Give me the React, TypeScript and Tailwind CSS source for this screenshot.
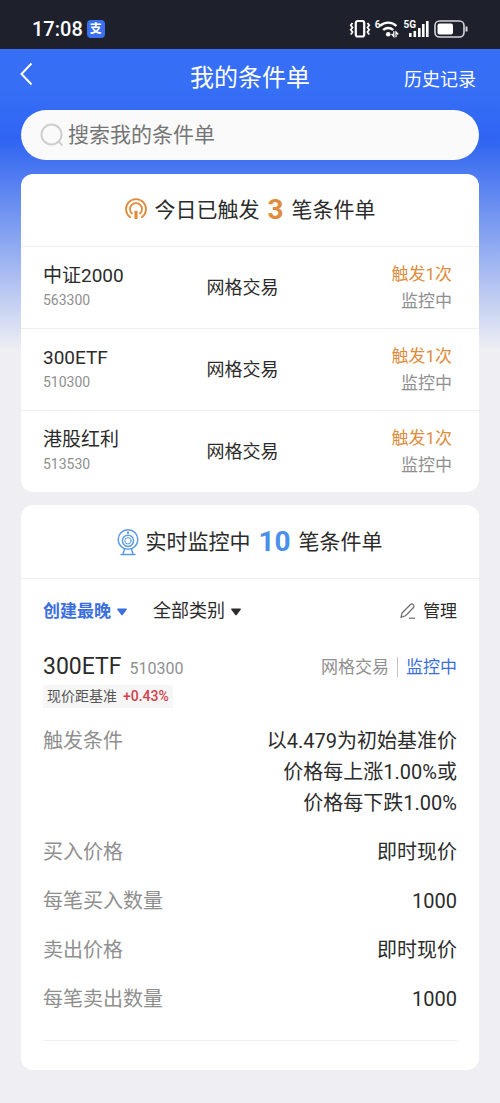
import { useState } from 'react';

const triggered = [
  { name: '中证2000', code: '563300', type: '网格交易', times: 1 },
  { name: '300ETF', code: '510300', type: '网格交易', times: 1 },
  { name: '港股红利', code: '513530', type: '网格交易', times: 1 },
];

const details = [
  { label: '买入价格', value: '即时现价' },
  { label: '每笔买入数量', value: '1000' },
  { label: '卖出价格', value: '即时现价' },
  { label: '每笔卖出数量', value: '1000' },
];

function StatusBar() {
  return (
    <div className="flex h-[49px] items-center justify-between bg-[#1e212b] pt-2 pr-8 pl-8 text-white">
      <div className="flex items-center gap-1">
        <span className="text-xl leading-6 font-medium">17:08</span>
        <span className="flex h-[18px] w-[18px] items-center justify-center rounded bg-[#3a70f0] text-xs leading-none font-bold">
          支
        </span>
      </div>
      <div className="flex items-center gap-1">
        {/* Vibrate */}
        <svg width="22" height="20" viewBox="0 0 22 20" fill="none" stroke="currentColor">
          <rect x="6.8" y="2" width="8.4" height="15.5" rx="2" strokeWidth="2.2" />
          <path d="M3.500 4 1.800 6.300 3.500 8.500 1.800 10.800 3.500 13 1.800 15.500M18.500 4 20.200 6.300 18.500 8.500 20.200 10.800 18.500 13 20.200 15.500" strokeWidth="1.8" />
        </svg>
        {/* Wi-Fi */}
        <span className="flex items-start">
          <span className="text-[10px] leading-3 font-bold">6</span>
          <svg className="-ml-px" width="20" height="20" viewBox="0 0 20 20" fill="none" stroke="currentColor" strokeWidth="2.4">
            <path d="M1 7a11.600 11.600 0 0 1 16.400 0M4.200 11a7.200 7.200 0 0 1 10 0" />
            <circle cx="9.2" cy="15.3" r="2.3" fill="currentColor" stroke="none" />
            <path d="M14.800 12.300v5.200L12.600 15M17 18.200V13l2.200 2.500" strokeWidth="1.3" />
          </svg>
        </span>
        {/* Mobile signal */}
        <span className="flex items-start">
          <span className="text-[10px] leading-3 font-bold">5G</span>
          <svg className="-ml-2" width="22" height="20" viewBox="0 0 22 20" fill="currentColor">
            <rect x="1" y="14" width="2.6" height="4" />
            <rect x="5.5" y="12" width="2.6" height="6" />
            <rect x="10" y="9" width="2.6" height="9" />
            <rect x="14" y="5" width="2.6" height="13" />
            <rect x="18" y="2" width="2.6" height="16" />
          </svg>
        </span>
        {/* Battery */}
        <svg width="34" height="18" viewBox="0 0 34 18" fill="none">
          <rect x="1" y="1" width="29" height="16" rx="4.5" stroke="#d5d6da" strokeWidth="1.6" />
          <rect x="3.5" y="3.5" width="15.5" height="11" rx="2" fill="currentColor" />
          <path d="M32.5 6.5v5" stroke="#d5d6da" strokeWidth="2" />
        </svg>
      </div>
    </div>
  );
}

function TriggerIcon() {
  return (
    <svg width="24" height="24" viewBox="0 0 24 24" fill="none" stroke="#e08c3c" strokeWidth="1.8" strokeLinecap="round">
      <path d="M6.200 19.200a10 10 0 1 1 11.600 0" />
      <path d="M8 15.500a6 6 0 1 1 8 0" />
      <path d="M12 12.800v8.200" strokeWidth="3.2" strokeLinecap="butt" />
    </svg>
  );
}

function MonitorIcon() {
  return (
    <svg width="22" height="28" viewBox="0 0 22 28" fill="none" stroke="#5b9be6" strokeWidth="1.5" strokeLinecap="round">
      <circle cx="11" cy="11.5" r="9.8" />
      <circle cx="11" cy="12.8" r="5.6" />
      <circle cx="11" cy="12.8" r="3.2" strokeWidth="1" />
      <circle cx="11" cy="4.8" r="1.2" fill="#5b9be6" stroke="none" />
      <path d="M7.500 21 6 26M14.500 21 16 26M4 26.500h14" />
    </svg>
  );
}

function Filter({ label, options, active }: { label: string; options: string[]; active?: boolean }) {
  const [value, setValue] = useState(options[0]);

  return (
    <label className={active ? 'relative text-[17px] font-bold text-[#3b6fe0]' : 'relative text-[18px] text-[#2b2b2b]'}>
      <select
        aria-label={label}
        value={value}
        onChange={(e) => setValue(e.target.value)}
        className="block h-7 appearance-none bg-transparent pr-4 leading-7 outline-none"
      >
        {options.map((option) => (
          <option key={option}>{option}</option>
        ))}
      </select>
      <svg className="pointer-events-none absolute top-[11px] right-0" width="10" height="8" viewBox="0 0 10 8" fill="currentColor">
        <path d="M1 .5h8c.8 0 1 .6.6 1.2L5.7 6.9c-.4.5-1 .5-1.4 0L.4 1.700C0 1.100.2.5 1 .5z" />
      </svg>
    </label>
  );
}

export default function App() {
  return (
    <div className="min-h-screen bg-[#eeeef3] font-[Roboto,'Noto_Sans_CJK_SC',sans-serif] text-[#2b2b2b]">
      <StatusBar />

      <div className="bg-[linear-gradient(to_bottom,#366ff6_0px,#366ff6_40px,#2f64f3_90px,#4272f0_112px,#eeeef3_300px)]">
        {/* Page header */}
        <header className="grid h-[61px] grid-cols-[1fr_auto_1fr] items-center px-5 pb-1 text-white">
          <button aria-label="返回" className="justify-self-start pb-2">
            <svg width="13" height="24" viewBox="0 0 13 24" fill="none" stroke="currentColor" strokeWidth="2">
              <path d="M11.500 1.500 1.500 12 11.500 22.500" />
            </svg>
          </button>
          <h1 className="text-2xl leading-8">我的条件单</h1>
          <a href="#history" className="justify-self-end pt-1 pr-1 text-[18px] leading-7">
            历史记录
          </a>
        </header>

        <main className="px-[21px] pb-8">
          <label className="flex h-[50px] items-center gap-1 rounded-full bg-[#fafafa] pl-[19px]">
            <svg width="24" height="24" viewBox="0 0 24 24" fill="none" stroke="#cfcfcf" strokeWidth="2">
              <circle cx="11.500" cy="11.500" r="10" />
              <path d="m18.500 18.500 4 4" />
            </svg>
            <input
              type="search"
              aria-label="搜索我的条件单"
              placeholder="搜索我的条件单"
              className="min-w-0 flex-1 bg-transparent text-[21px] leading-8 outline-none placeholder:text-[#757575]"
            />
          </label>

          {/* Triggered today */}
          <section className="mt-[14px] rounded-xl bg-white">
            <h2 className="flex h-[72px] items-center justify-center gap-[6px] text-[21px] leading-8">
              <TriggerIcon />
              <span>今日已触发</span>
              <strong className="px-[2px] text-[28px] text-[#e08c3c]">3</strong>
              <span>笔条件单</span>
            </h2>
            <ul>
              {triggered.map((item) => (
                <li
                  key={item.code}
                  className="grid h-[82px] grid-cols-[2fr_2fr_1fr] items-center border-t border-[#efefef] pr-[27px] pl-[22px]"
                >
                  <div>
                    <p className="text-[19px] leading-6">{item.name}</p>
                    <p className="text-sm leading-6 text-[#8f8f8f]">{item.code}</p>
                  </div>
                  <p className="text-[18px] leading-6">{item.type}</p>
                  <div className="text-right text-[17px] leading-[27px] whitespace-nowrap">
                    <p className="text-[#e08c3c]">触发{item.times}次</p>
                    <p className="text-[#8f8f8f]">监控中</p>
                  </div>
                </li>
              ))}
            </ul>
          </section>

          {/* Monitoring */}
          <section className="mt-[13px] rounded-xl bg-white">
            <h2 className="flex h-[73px] items-center justify-center gap-[6px] text-[21px] leading-8">
              <MonitorIcon />
              <span>实时监控中</span>
              <strong className="px-[2px] text-[28px] text-[#4a90ea]">10</strong>
              <span>笔条件单</span>
            </h2>

            <div className="border-t border-[#efefef] px-[22px] pb-[29px]">
              <div className="flex h-16 items-center">
                <div className="flex gap-[26px]">
                  <Filter label="排序" options={['创建最晚', '创建最早']} active />
                  <Filter label="类别" options={['全部类别', '网格交易']} />
                </div>
                <button className="ml-auto flex items-center gap-[6px] text-[17px] leading-7">
                  <svg width="18" height="18" viewBox="0 0 18 18" fill="none" stroke="#6b6b6b" strokeWidth="1.2" strokeLinejoin="round">
                    <path d="M2 15.500 3 11 11.500 2.500c2-1.600 4.600.8 3 3L6.500 13.800z" />
                    <path d="M10 16.200h6" />
                  </svg>
                  管理
                </button>
              </div>

              <div className="flex h-12 items-center justify-between">
                <h3 className="flex items-baseline gap-2">
                  <span className="text-[23px] leading-8">300ETF</span>
                  <span className="text-[16px] text-[#8f8f8f]">510300</span>
                </h3>
                <p className="flex items-center text-[17px] leading-6 text-[#8f8f8f]">
                  <span className="mr-2 border-r border-[#c4c4c4] pr-2 leading-5">网格交易</span>
                  <span className="text-[#3b6fe0]">监控中</span>
                </p>
              </div>
              <p className="-mt-[6px] flex w-fit gap-[6px] bg-[#f6f6f6] px-1 text-sm leading-[23px] text-[#555555]">
                现价距基准
                <span className="font-medium text-[#d2404a]">+0.43%</span>
              </p>

              <dl className="mt-[18px] border-b border-[#efefef] pb-4 text-xl">
                <div className="flex justify-between leading-[31px]">
                  <dt className="text-[#8f8f8f]">触发条件</dt>
                  <dd className="text-right">
                    以4.479为初始基准价
                    <br />
                    价格每上涨1.00%或
                    <br />
                    价格每下跌1.00%
                  </dd>
                </div>
                <div className="mt-[9px]">
                  {details.map((item) => (
                    <div key={item.label} className="flex justify-between leading-[49px]">
                      <dt className="text-[#8f8f8f]">{item.label}</dt>
                      <dd>{item.value}</dd>
                    </div>
                  ))}
                </div>
              </dl>
            </div>
          </section>
        </main>
      </div>
    </div>
  );
}
